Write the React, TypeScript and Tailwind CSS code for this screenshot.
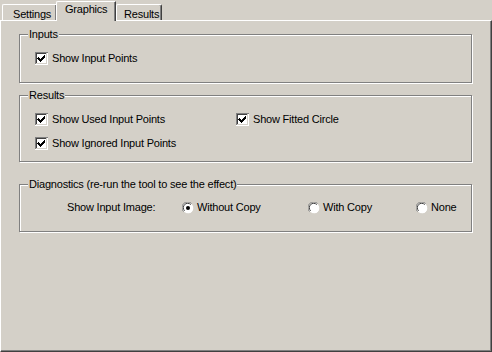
import type { ReactNode } from "react";

const font = { fontFamily: '"Liberation Sans", Arial, sans-serif' };

function Checkbox({ checked = true }: { checked?: boolean }) {
  return (
    <svg width="13" height="13" viewBox="0 0 13 13" className="shrink-0" shapeRendering="crispEdges">
      <rect x="0" y="0" width="13" height="13" fill="#ffffff" />
      <path d="M0 0.5H12.5M0.5 0V12" stroke="#808080" />
      <path d="M1 1.5H11.5M1.5 1V11" stroke="#404040" />
      <path d="M1 11.5H12M11.5 1V12" stroke="#d4d0c8" />
      {checked && (
        <path
          d="M3 5h1v1h1v1h1v-1h1v-1h1v-1h1v-1h1v3h-1v1h-1v1h-1v1h-1v1h-1v-1h-1v-1h-1v-1h-1z"
          fill="#000000"
        />
      )}
    </svg>
  );
}

function Radio({ checked = false }: { checked?: boolean }) {
  return (
    <svg width="12" height="12" viewBox="0 0 12 12" className="shrink-0">
      <circle cx="6" cy="6" r="5.5" fill="#ffffff" />
      <path d="M1.6 9.6A5.3 5.3 0 0 1 9.6 1.6" stroke="#808080" strokeWidth="1" fill="none" />
      <path d="M2.6 8.8A4.2 4.2 0 0 1 8.8 2.6" stroke="#404040" strokeWidth="1" fill="none" />
      <path d="M10.4 2.4A5.3 5.3 0 0 1 2.4 10.4" stroke="#d4d0c8" strokeWidth="1" fill="none" />
      {checked && <circle cx="6" cy="6" r="2" fill="#000000" />}
    </svg>
  );
}

function Group({ title, className, children }: { title: string; className: string; children: ReactNode }) {
  return (
    <div
      className={`relative ml-[18px] w-[453px] border border-[#808080] shadow-[inset_1px_1px_0_#ffffff,1px_1px_0_#ffffff] ${className}`}
    >
      <span className="absolute left-[8px] top-[-8px] bg-[#d4d0c8] px-[1px] leading-[14px]">{title}</span>
      {children}
    </div>
  );
}

function Row({ children }: { children: ReactNode }) {
  return <div className="flex h-[13px] items-center gap-[4px] whitespace-nowrap">{children}</div>;
}

export default function App() {
  return (
    <div
      className="flex h-[352px] w-[492px] flex-col bg-[#d4d0c8] text-[11px] tracking-[-0.2px] text-black"
      style={font}
    >
      <div className="flex h-[20px] items-end pl-[2px]">
        <div className="flex h-[16px] w-[54px] items-start rounded-tl-[2px] border-l border-t border-white pl-[10px] pt-[3px] leading-[13px] shadow-[inset_-1px_0_0_#808080]">
          Settings
        </div>
        <div className="relative z-10 mb-[-1px] flex h-[20px] w-[60px] items-start rounded-tl-[2px] border-l border-t border-r border-white border-r-[#404040] bg-[#d4d0c8] pl-[8px] pt-[1px] leading-[13px] shadow-[inset_-1px_0_0_#808080]">
          Graphics
        </div>
        <div className="flex h-[16px] w-[46px] items-start rounded-tl-[2px] rounded-tr-[2px] border-l border-t border-r border-white border-r-[#404040] pl-[7px] pt-[3px] leading-[13px] shadow-[inset_-1px_0_0_#808080]">
          Results
        </div>
      </div>
      <div className="flex flex-1 flex-col border-b border-l border-r border-t border-white border-b-[#404040] border-r-[#404040] pt-[13px] shadow-[inset_-1px_-1px_0_#808080]">
        <Group title="Inputs" className="h-[49px] pl-[15px] pt-[17px]">
          <Row>
            <Checkbox />
            <span>Show Input Points</span>
          </Row>
        </Group>
        <Group title="Results" className="mt-[12px] h-[67px] pl-[15px] pt-[17px]">
          <div className="flex">
            <div className="flex w-[201px] flex-col gap-[11px]">
              <Row>
                <Checkbox />
                <span>Show Used Input Points</span>
              </Row>
              <Row>
                <Checkbox />
                <span>Show Ignored Input Points</span>
              </Row>
            </div>
            <Row>
              <Checkbox />
              <span>Show Fitted Circle</span>
            </Row>
          </div>
        </Group>
        <Group title="Diagnostics (re-run the tool to see the effect)" className="mt-[22px] h-[48px] pl-[47px] pt-[16px]">
          <div className="flex h-[13px] items-center whitespace-nowrap">
            <span className="w-[115px]">Show Input Image:</span>
            <div className="flex w-[126px] items-center gap-[3px]">
              <Radio checked />
              <span>Without Copy</span>
            </div>
            <div className="flex w-[108px] items-center gap-[3px]">
              <Radio />
              <span>With Copy</span>
            </div>
            <div className="flex items-center gap-[3px]">
              <Radio />
              <span>None</span>
            </div>
          </div>
        </Group>
      </div>
    </div>
  );
}
